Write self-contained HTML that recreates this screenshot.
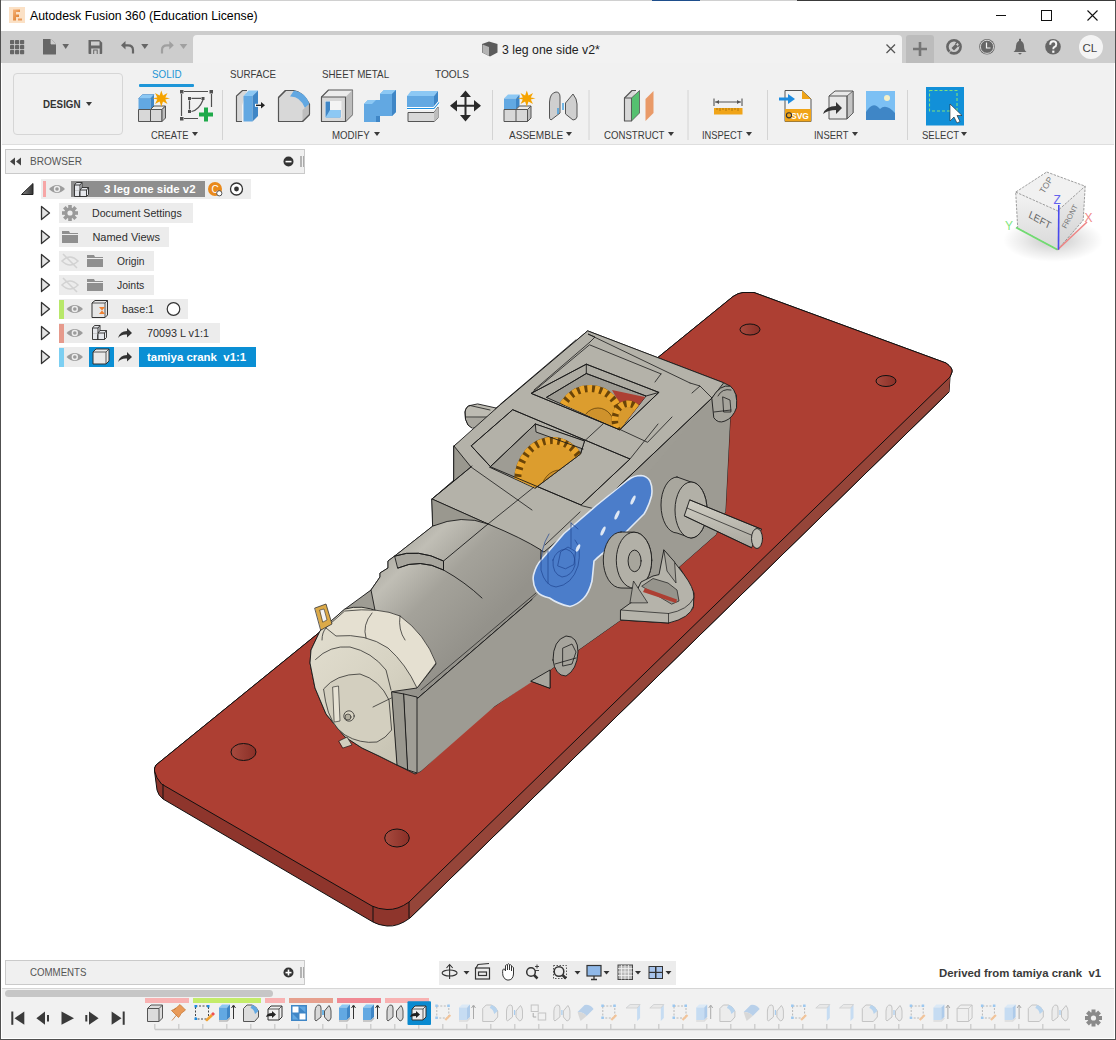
<!DOCTYPE html>
<html><head><meta charset="utf-8">
<style>
*{margin:0;padding:0;box-sizing:border-box}
html,body{width:1116px;height:1040px;overflow:hidden;background:#fff;font-family:"Liberation Sans",sans-serif;color:#3c3c3c}
.a{position:absolute}
.t{position:absolute;white-space:nowrap;line-height:1;transform-origin:0 0}
.cap{font-size:11px;color:#3a3a3a;transform:scaleX(0.88)}
.arr{position:absolute;width:0;height:0;border-left:3px solid transparent;border-right:3px solid transparent;border-top:4px solid #3a3a3a}
.row{position:absolute;font-size:11px;color:#2e2e2e;white-space:nowrap;line-height:1}
.rbg{position:absolute;background:#ececec}
</style></head>
<body>

<!-- window borders -->
<div class="a" style="left:0;top:0;width:1116px;height:1px;background:#d0d0d0;z-index:10"></div>
<div class="a" style="left:652px;top:0;width:48px;height:1px;background:#1e4e8c;z-index:10"></div>
<div class="a" style="left:797px;top:0;width:319px;height:1px;background:#3a3a3a;z-index:10"></div>
<div class="a" style="left:0;top:0;width:1px;height:1040px;background:#505050;z-index:10"></div>
<div class="a" style="left:1115px;top:0;width:1px;height:1040px;background:#505050;z-index:10"></div>
<div class="a" style="left:0;top:1039px;width:1116px;height:1px;background:#505050;z-index:10"></div>

<!-- title bar -->
<div class="a" style="left:1px;top:1px;width:1114px;height:30px;background:#fff"></div>
<svg class="a" style="left:9px;top:7px" width="16" height="16" viewBox="0 0 16 16">
<defs><linearGradient id="fg" x1="0" y1="0" x2="1" y2="1"><stop offset="0" stop-color="#f6b47a"/><stop offset="1" stop-color="#d8731e"/></linearGradient></defs>
<rect x="0" y="0" width="16" height="16" fill="#fbe1c6"/>
<path d="M4,2.5 H11 V5 H7 V7.5 H10 V10 H7 V13.5 H4 Z" fill="url(#fg)"/>
<path d="M9,11.5 H13 V13.5 H9 Z" fill="#e89a5a"/>
</svg>
<div class="t" style="left:30px;top:10px;font-size:12.3px;color:#000">Autodesk Fusion 360 (Education License)</div>
<div class="a" style="left:996px;top:15px;width:10px;height:1px;background:#111"></div>
<div class="a" style="left:1041px;top:10px;width:11px;height:11px;border:1px solid #111"></div>
<svg class="a" style="left:1086px;top:9px" width="13" height="13"><path d="M1.5 1.5L11.5 11.5M11.5 1.5L1.5 11.5" stroke="#111" stroke-width="1.1"/></svg>

<!-- tab bar -->
<div class="a" style="left:1px;top:31px;width:1114px;height:32px;background:#cdcdcd"></div>
<div class="a" style="left:193px;top:35px;width:709px;height:28px;background:#f2f2f2;border-radius:4px 4px 0 0"></div>
<svg class="a" style="left:0;top:31px" width="200" height="32" viewBox="0 31 200 32">
<g fill="#666">
<rect x="10" y="40" width="4.2" height="4.2" rx="0.7"/><rect x="15" y="40" width="4.2" height="4.2" rx="0.7"/><rect x="20" y="40" width="4.2" height="4.2" rx="0.7"/>
<rect x="10" y="45" width="4.2" height="4.2" rx="0.7"/><rect x="15" y="45" width="4.2" height="4.2" rx="0.7"/><rect x="20" y="45" width="4.2" height="4.2" rx="0.7"/>
<rect x="10" y="50" width="4.2" height="4.2" rx="0.7"/><rect x="15" y="50" width="4.2" height="4.2" rx="0.7"/><rect x="20" y="50" width="4.2" height="4.2" rx="0.7"/>
<path d="M43,39 H51 L56,44 V54 Q56,54.6 55.4,54.6 H43.6 Q43,54.6 43,54 Z"/>
<path d="M62.4,44 H69 L65.7,49 Z"/>
<path d="M88.5,40 H99.5 L102.2,42.7 V53.2 Q102.2,54 101.4,54 H89.3 Q88.5,54 88.5,53.2 Z"/>
<path d="M141.2,44 H148.4 L144.8,49 Z"/>
</g>
<path d="M51,39 V44 H56" fill="#cdcdcd" stroke="#cdcdcd" stroke-width="0.8"/>
<rect x="91" y="41.5" width="8.5" height="4" fill="#cdcdcd"/>
<rect x="91.2" y="48.5" width="8.5" height="5.5" fill="#cdcdcd"/><rect x="93.2" y="49.5" width="4.5" height="4.5" fill="#666"/><rect x="94.2" y="50.5" width="2.5" height="3.5" fill="#cdcdcd"/>
<path d="M133,53.4 V50 Q133,45.3 128,45.3 H124" stroke="#666" stroke-width="2.2" fill="none"/>
<path d="M125.5,41 L121,45.3 L125.5,49.6 Z" fill="#666"/>
<path d="M162,53.4 V50 Q162,45.3 167,45.3 H170.5" stroke="#a0a0a0" stroke-width="2.2" fill="none"/>
<path d="M169.3,41 L173.8,45.3 L169.3,49.6 Z" fill="#a0a0a0"/>
<path d="M179.7,44 H187.3 L183.5,49 Z" fill="#a0a0a0"/>
</svg>
<!-- doc tab content -->
<svg class="a" style="left:481px;top:41px" width="18" height="16" viewBox="0 0 18 16">
<path d="M1,3 L8,0.5 L16.5,3 V11.5 L9,15.5 L1,11.5 Z" fill="#5c5c5c"/>
<path d="M1.5,3.5 L8,6 V15 L1.5,11.5 Z" fill="#b4b4b4"/>
</svg>
<div class="t" style="left:502px;top:44px;font-size:12.3px;color:#222">3 leg one side v2*</div>
<svg class="a" style="left:885px;top:43px" width="12" height="12"><path d="M1.5 1.5L10 10M10 1.5L1.5 10" stroke="#555" stroke-width="1.3"/></svg>
<div class="a" style="left:906px;top:35px;width:28px;height:28px;background:#bcbcbc;border-radius:3px 3px 0 0"></div>
<svg class="a" style="left:906px;top:35px" width="210" height="28" viewBox="906 35 210 28">
<path d="M920,42 V56 M913,49 H927" stroke="#757575" stroke-width="2.6"/>
<circle cx="954" cy="46.8" r="6.6" fill="none" stroke="#666" stroke-width="2.6"/>
<path d="M948,53 L952.5,48.5 L950.5,46.5 L955,42 L959.5,46.5 L955,51 L953,49 L948.5,53.5 Z" fill="#cdcdcd"/>
<path d="M951.5,48 L955.5,44 L958,46.5 L954,50.5 Z" fill="#666"/>
<path d="M955.5,44 L958,41.5 M958,46.5 L960.5,44" stroke="#666" stroke-width="1.4"/>
<circle cx="987" cy="46.8" r="7.8" fill="#666"/>
<circle cx="987" cy="46.8" r="6.6" fill="none" stroke="#e0e0e0" stroke-width="0.9"/>
<path d="M986.5,42.5 V48 H990.5" stroke="#f2f2f2" stroke-width="1.2" fill="none"/>
<path d="M1013.5,52 Q1016,50.5 1016,46 Q1016.2,41.5 1020,40.5 Q1023.8,41.5 1024,46 Q1024,50.5 1026.5,52 Z" fill="#666"/>
<rect x="1019" y="38.8" width="2" height="2.5" fill="#666"/>
<path d="M1018,53 H1022 L1020,54.8 Z" fill="#666"/>
<circle cx="1053" cy="46.8" r="7.8" fill="#666"/>
<path d="M1050.2,44.8 Q1050.2,41.3 1053.2,41.3 Q1056.3,41.3 1056.3,44.3 Q1056.3,46.3 1054.2,47.2 Q1053.3,47.7 1053.3,49.3" fill="none" stroke="#f4f4f4" stroke-width="1.9"/>
<rect x="1052.2" y="50.6" width="2.2" height="2.2" fill="#f4f4f4"/>
<circle cx="1091" cy="47" r="12" fill="#f4f4f4"/>
<text x="1082.5" y="51.5" font-family="Liberation Sans" font-size="11.5" fill="#444">CL</text>
</svg>

<!-- toolbar -->
<div class="a" style="left:1px;top:63px;width:1114px;height:81px;background:#f1f1f1"></div>
<div class="a" style="left:1px;top:144px;width:1114px;height:1px;background:#dedede"></div>
<div class="a" style="left:13px;top:73px;width:110px;height:62px;border:1px solid #d6d6d6;border-radius:4px;background:#f1f1f1"></div>
<div class="t cap" style="left:43px;top:99px;font-weight:bold;color:#333;transform:scaleX(0.89)">DESIGN</div>
<div class="arr" style="left:86px;top:102px"></div>
<div class="t cap" style="left:151.5px;top:69px;color:#1c95d5;transform:scaleX(0.894)">SOLID</div>
<div class="a" style="left:139px;top:84px;width:55px;height:3px;background:#1e96d8;border-radius:1px"></div>
<div class="t cap" style="left:229.5px;top:69px;transform:scaleX(0.885)">SURFACE</div>
<div class="t cap" style="left:322.4px;top:69px;transform:scaleX(0.89)">SHEET METAL</div>
<div class="t cap" style="left:435.3px;top:69px;transform:scaleX(0.92)">TOOLS</div>
<div class="t cap" style="left:150.6px;top:130px;transform:scaleX(0.854)">CREATE</div><div class="arr" style="left:192px;top:132px"></div>
<div class="t cap" style="left:332.4px;top:130px;transform:scaleX(0.88)">MODIFY</div><div class="arr" style="left:374px;top:132px"></div>
<div class="t cap" style="left:508.6px;top:130px;transform:scaleX(0.914)">ASSEMBLE</div><div class="arr" style="left:566px;top:132px"></div>
<div class="t cap" style="left:603.8px;top:130px;transform:scaleX(0.876)">CONSTRUCT</div><div class="arr" style="left:667.5px;top:132px"></div>
<div class="t cap" style="left:702px;top:130px;transform:scaleX(0.847)">INSPECT</div><div class="arr" style="left:745.5px;top:132px"></div>
<div class="t cap" style="left:814.2px;top:130px;transform:scaleX(0.858)">INSERT</div><div class="arr" style="left:851.5px;top:132px"></div>
<div class="t cap" style="left:921.7px;top:130px;transform:scaleX(0.867)">SELECT</div><div class="arr" style="left:961px;top:132px"></div>

<svg class="a" style="left:0;top:63px" width="1116" height="82" viewBox="0 63 1116 82">
<g stroke-linejoin="round">
<!-- create solid -->
<g transform="translate(0,0)">
<path d="M138.5,98.5 L142.5,94.5 L154,94.5 L150.5,98.5 Z" fill="#8cc8f4" stroke="#4a8cc8" stroke-width="0.6"/>
<path d="M138.5,98.5 H150.5 V109.5 H138.5 Z" fill="#62a8e2"/>
<path d="M150.5,98.5 L154,94.5 V106 L150.5,109.5 Z" fill="#3f86c6"/>
<path d="M138.5,109.5 H162 V121.5 H138.5 Z" fill="#d8d8d8" stroke="#555" stroke-width="1"/>
<path d="M150.5,109.5 L154,106 H165.5 L162,109.5 Z" fill="#ececec" stroke="#555" stroke-width="1"/>
<path d="M162,109.5 L165.5,106 V118 L162,121.5 Z" fill="#bdbdbd" stroke="#555" stroke-width="1"/>
<line x1="150.5" y1="109.5" x2="150.5" y2="121.5" stroke="#555"/>
<path d="M161.3,90.5 L163,95.5 L167.5,93 L165.3,97.5 L170,98.3 L165.3,99.5 L167.5,104 L163,101.5 L161.3,106.5 L159.6,101.5 L155,104 L157.3,99.5 L152.5,98.3 L157.3,97.5 L155,93 L159.6,95.5 Z" fill="#f5a300"/>
</g>
<!-- sketch -->
<g stroke="#505050" stroke-width="1.2" fill="none">
<path d="M184,91.5 H208 M211.5,94 V107 M181.5,94 V116 M184,118.5 H198"/>
<path d="M191.5,98.4 H201 M189.5,100.5 V109.5 M191.5,111.5 Q199,110 203,100"/>
</g>
<g fill="#505050">
<rect x="180" y="90" width="3.5" height="3.5"/><rect x="209.5" y="90" width="3.5" height="3.5"/><rect x="180" y="117" width="3.5" height="3.5"/>
<rect x="188" y="97" width="3" height="3"/><rect x="201.5" y="97" width="3" height="3"/><rect x="188" y="110" width="3" height="3"/>
</g>
<path d="M204,107.5 H208 V112.5 H213 V116.5 H208 V121.5 H204 V116.5 H199 V112.5 H204 Z" fill="#1faa4a"/>
<line x1="222.5" y1="90" x2="222.5" y2="140" stroke="#d4d4d4"/>
<!-- press pull -->
<path d="M236.5,121.5 V96 L242.5,90.5 H247" fill="#d8d8d8" stroke="#555" stroke-width="1.1"/>
<rect x="236.5" y="96" width="5.5" height="25.5" fill="#d8d8d8"/>
<path d="M236.5,96 V121.5 H242" fill="none" stroke="#555" stroke-width="1.1"/>
<path d="M243.5,96 L248.5,90.5 H258 L252.5,96 Z" fill="#8cc8f4"/>
<rect x="243.5" y="96" width="9" height="25.5" fill="#62a8e2"/>
<path d="M252.5,96 L258,90.5 V116 L252.5,121.5 Z" fill="#3f86c6"/>
<path d="M255,105.3 H262" stroke="#fff" stroke-width="3"/>
<path d="M256,105.3 H262" stroke="#222" stroke-width="1.4"/>
<path d="M261,102 L265,105.3 L261,108.6 Z" fill="#222"/>
<!-- fillet -->
<path d="M278.5,121.5 V97.5 L285.5,90.5 H294 Q303,92 309.5,104 V114.5 L302.5,121.5 Z" fill="#d8d8d8" stroke="#555" stroke-width="1.1"/>
<path d="M290,96.5 Q300,96 305,108 L309.5,104 Q305,92 294,90.5 Z" fill="#62a8e2"/>
<path d="M302.5,121.5 V110 L309.5,104 V114.5 Z" fill="#bdbdbd"/>
<path d="M278.5,121.5 V97.5 L285.5,90.5 H294 M309.5,104 V114.5 L302.5,121.5 H278.5" fill="none" stroke="#555" stroke-width="1.1"/>
<!-- shell -->
<path d="M321.5,121.5 V97 L328.5,90 H352.5 V114.5 L345.5,121.5 Z" fill="#ececec" stroke="#555" stroke-width="1.1"/>
<path d="M345.5,121.5 V97 L352.5,90 V114.5 Z" fill="#bdbdbd"/>
<rect x="321.5" y="97" width="24" height="24.5" fill="#d8d8d8" stroke="#555" stroke-width="1.1"/>
<rect x="325" y="101" width="16.5" height="17" fill="#f4f4f4"/>
<path d="M325.5,101.5 H330 V110 H340.5 V117.5 H325.5 Z" fill="#3f86c6"/>
<path d="M330,110 H340.5 V117.5 H325.5 Z" fill="#8cc8f4"/>
<!-- combine -->
<path d="M364,104 L368,100 H380 V94 L384,90 H396 V112 L392,116 H380 V122 H364 Z" fill="#62a8e2"/>
<path d="M364,104 L368,100 H376 L372,104 Z M380,94 L384,90 H396 L392,94 Z" fill="#8cc8f4"/>
<path d="M392,94 L396,90 V112 L392,116 Z M376,116 H380 V122 L376,122 Z" fill="#3f86c6"/>
<!-- split -->
<path d="M407,96 L411,91 H438 L434,96 Z" fill="#8cc8f4"/>
<rect x="407" y="96" width="27" height="14" fill="#62a8e2"/>
<path d="M434,96 L438,91 V104 L434,110 Z" fill="#3f86c6"/>
<path d="M407,108.5 H434 L439,102.5" stroke="#fff" stroke-width="3" fill="none"/>
<path d="M407,108.5 H434 L439,102.5" stroke="#1e90e0" stroke-width="1.1" fill="none"/>
<path d="M408,112.5 H434 L438,107 V118 L434,121.5 H408 Z" fill="#d8d8d8" stroke="#555" stroke-width="1"/>
<path d="M434,112.5 L438,107 V118 L434,121.5 Z" fill="#bdbdbd"/>
<!-- move -->
<path d="M465.5,92 V120 M451.5,105.8 H479.5" stroke="#2a2a2a" stroke-width="2"/>
<path d="M465.5,90.5 L460,97 H471 Z M465.5,121.5 L460,115 H471 Z M450,105.8 L457,100 V111.5 Z M481,105.8 L474,100 V111.5 Z" fill="#2a2a2a"/>
<line x1="492.5" y1="90" x2="492.5" y2="140" stroke="#d4d4d4"/>
<!-- assemble new component -->
<g transform="translate(365.5,0)">
<path d="M138.5,98.5 L142.5,94.5 L154,94.5 L150.5,98.5 Z" fill="#8cc8f4"/>
<path d="M138.5,98.5 H150.5 V109.5 H138.5 Z" fill="#62a8e2"/>
<path d="M150.5,98.5 L154,94.5 V106 L150.5,109.5 Z" fill="#3f86c6"/>
<path d="M138.5,109.5 H162 V121.5 H138.5 Z" fill="#d8d8d8" stroke="#555" stroke-width="1"/>
<path d="M150.5,109.5 L154,106 H165.5 L162,109.5 Z" fill="#ececec" stroke="#555" stroke-width="1"/>
<path d="M162,109.5 L165.5,106 V118 L162,121.5 Z" fill="#bdbdbd" stroke="#555" stroke-width="1"/>
<line x1="150.5" y1="109.5" x2="150.5" y2="121.5" stroke="#555"/>
<path d="M161.3,90.5 L163,95.5 L167.5,93 L165.3,97.5 L170,98.3 L165.3,99.5 L167.5,104 L163,101.5 L161.3,106.5 L159.6,101.5 L155,104 L157.3,99.5 L152.5,98.3 L157.3,97.5 L155,93 L159.6,95.5 Z" fill="#f5a300"/>
</g>
<!-- joint -->
<path d="M549.5,102 Q550,93 556,92 Q560,92 560,97 V113 L551,120 Q549,119 549.5,116 Z" fill="#cfcfcf" stroke="#555" stroke-width="1"/>
<path d="M565.5,103 L573,94 Q577,99 577,104 V117 Q576,120 573,120 L565.5,114 Z" fill="#cfcfcf" stroke="#555" stroke-width="1"/>
<path d="M563,103 V110" stroke="#1e90e0" stroke-width="1.2"/><path d="M558,108 V114" stroke="#1e90e0" stroke-width="1.2"/>
<line x1="589" y1="90" x2="589" y2="140" stroke="#d4d4d4"/>
<!-- construct -->
<path d="M624.5,121 V98 L632,90.5 H636" fill="#d8d8d8" stroke="#555" stroke-width="1.1"/>
<rect x="624.5" y="98" width="7" height="23" fill="#d8d8d8" stroke="#555" stroke-width="1.1"/>
<path d="M631.5,98 L639.5,90.5 V113 L631.5,121 Z" fill="#55c070" stroke="#555" stroke-width="0.8"/>
<path d="M645.5,99 L653.5,91 V113 L645.5,121 Z" fill="#e99a68"/>
<line x1="688" y1="90" x2="688" y2="140" stroke="#d4d4d4"/>
<!-- inspect -->
<path d="M714,98.5 V106 M742,98.5 V106 M715,102 H741" stroke="#555" stroke-width="1.1"/>
<path d="M715.5,102 L719,100 V104 Z M740.5,102 L737,100 V104 Z" fill="#555"/>
<rect x="714" y="108" width="28.5" height="6.5" fill="#f0a418"/>
<path d="M717,108 V110 M720,108 V111 M723,108 V110 M726,108 V111 M729,108 V110 M732,108 V111 M735,108 V110 M738,108 V111" stroke="#8a5a00" stroke-width="0.6"/>
<line x1="767.5" y1="90" x2="767.5" y2="140" stroke="#d4d4d4"/>
<!-- insert svg -->
<path d="M785,90.5 H802 L811,99 V121.5 H785 Z" fill="#f4f4f4" stroke="#555" stroke-width="1"/>
<path d="M802,90.5 L811,99 H802 Z" fill="#f0a418"/>
<rect x="785" y="109" width="26" height="12.5" fill="#f0a418"/>
<text x="791" y="119" font-family="Liberation Sans" font-weight="bold" font-size="8.5" fill="#fff">SVG</text>
<circle cx="789" cy="115.3" r="2.6" fill="none" stroke="#333" stroke-width="1.1"/>
<path d="M779,99 H789" stroke="#1e8ce0" stroke-width="3"/>
<path d="M788,94 L795,99 L788,104 Z" fill="#1e8ce0"/>
<!-- insert derive -->
<path d="M829,96 L835,91 H853 V113 L847,119 H829 Z" fill="#e8e8e8" stroke="#555" stroke-width="1"/>
<path d="M847,96 L853,91 V113 L847,119 Z" fill="#c4c4c4" stroke="#555" stroke-width="0.8"/>
<path d="M829,96 H847 V119" fill="none" stroke="#555" stroke-width="1"/>
<path d="M823,114 Q826,106 836,106 V102 L842,108 L836,114 V110 Q828,110 823,114 Z" fill="#333"/>
<!-- insert canvas -->
<rect x="866" y="91" width="29" height="29" fill="#7cc0f4"/>
<path d="M866,112 Q873,100 880,109 Q886,103 895,113 V120 H866 Z" fill="#3f86c6"/>
<circle cx="887" cy="98" r="3" fill="#f4f0c8"/>
<line x1="907.5" y1="90" x2="907.5" y2="140" stroke="#d4d4d4"/>
<!-- select -->
<rect x="926" y="87" width="38" height="38.5" fill="#1290d8"/>
<rect x="929.5" y="90.5" width="27.5" height="20.5" fill="none" stroke="#7ee07e" stroke-width="1.1" stroke-dasharray="3,2"/>
<path d="M950,104 V121 L954,117 L957,123 L960,121.5 L957,115.5 L962,115.5 Z" fill="#fff" stroke="#222" stroke-width="0.6"/>
</g>
</svg>

<svg class="a" style="left:0;top:0" width="1116" height="1040" viewBox="0 0 1116 1040">
<defs>
<linearGradient id="cyl" gradientUnits="userSpaceOnUse" x1="392" y1="548" x2="478" y2="634">
<stop offset="0" stop-color="#aeaca4"/><stop offset="0.18" stop-color="#c0beb5"/><stop offset="0.5" stop-color="#a4a29a"/><stop offset="1" stop-color="#94928b"/>
</linearGradient>
<linearGradient id="hole" x1="0" y1="0" x2="1" y2="0">
<stop offset="0" stop-color="#a84a3e"/><stop offset="1" stop-color="#8a2f27"/>
</linearGradient>
<linearGradient id="capg" gradientUnits="userSpaceOnUse" x1="320" y1="620" x2="420" y2="720">
<stop offset="0" stop-color="#e2decf"/><stop offset="0.6" stop-color="#d6d2c2"/><stop offset="1" stop-color="#c9c5b5"/>
</linearGradient>
<linearGradient id="shaftg" gradientUnits="userSpaceOnUse" x1="0" y1="500" x2="0" y2="548">
<stop offset="0" stop-color="#cfcdc3"/><stop offset="1" stop-color="#a9a79e"/>
</linearGradient>
<clipPath id="w1"><path d="M546.7,397.2 L586.3,373.5 L646,396 L620,429.5 Z"/></clipPath>
<clipPath id="w2"><path d="M490,467 L535.3,424 L584.5,441 L580.5,454 L535.3,488 Z"/></clipPath>
</defs>
<g stroke="#111" stroke-width="1" stroke-linejoin="round">
<!-- plate silhouette (sides) -->
<path fill="#8e352c" d="M743,292.5 L754,292.5 L946,363 Q953,368 952,372 L950,377 L949,392 L410,918 Q398,927 387,926 Q378,925 373,922 L163,799 Q158,795 157,790 L154.5,771 Q154,768 156,765 L733,296.5 Q738,293 743,292.5 Z"/>
<path fill="#954539" stroke="none" d="M950,377 L949,392 L410,918 L409,902 Z"/><path fill="none" d="M949,392 L410,918"/>
<path fill="#ad3f33" d="M743,292.5 L754,292.5 L946,363 Q953,368 952,372 L950,377 L409,902 Q398,910 387,909.5 Q378,909 372,906 L161.5,784 Q156,778 154.5,771 Q154,768 156,765 L733,296.5 Q738,293 743,292.5 Z"/>
<path d="M163,784 L163,799 M373,906 V922 M409,902 V918" fill="none"/>
<ellipse cx="750" cy="329.5" rx="10" ry="5.5" fill="url(#hole)"/>
<ellipse cx="886" cy="381" rx="10" ry="5.5" fill="url(#hole)"/>
<ellipse cx="243.5" cy="752" rx="12.5" ry="8.5" fill="url(#hole)"/>
<ellipse cx="397" cy="838" rx="12.3" ry="9" fill="url(#hole)"/>
</g>
<g stroke="#1a1a1a" stroke-width="0.9" stroke-linejoin="round" stroke-linecap="round">
<!-- body silhouette base (right face colour) -->
<path fill="#9e9c94" d="M588,331 L723.7,382.8 L730.4,386.2 L736.5,395.6 L736.5,407.7 L730.4,413.8 L725.4,511.5 L716,534.6 L679,567 L684,574.6 L694,593 L693,608.5 L668.5,623 L620.8,620 L550,670 L550,688 L531,681 L495,706 L480,716 L421,771 L415,774 L397,765 L379,756 L362,748 L345,737 L326,714 L315,688 L310,663 L311,650 L320,631 L345,609 L371,590 L380,577 L380,573 L388,568 L388,561 L396,555 L433,526 L432,499 L454,480 L454,446 L479,427 L492,411 L500,405 Z"/>
<!-- left shaft stub -->
<path fill="#bdbbb2" d="M470,405.5 Q466,406 465,412 Q464.5,420 468,425 L472,428 L491,422 L496,408 L478,404 Z"/>
<path fill="#a9a79f" stroke="none" d="M466,418 Q467,425 472,428 L491,422 L493,417 Z"/>
<path fill="none" d="M470,405.5 Q466,406 465,412 Q464.5,420 468,425 L472,428 M470,405.5 L490,410 M466,417 L490,417" stroke-width="0.8"/>
<!-- top face -->
<path fill="#b4b2a9" d="M588,331 L723.7,382.8 L712,398 L595,509 L544,552 L488,524 L432,499 L454,481 L454,446 L500,405 Z"/>
<!-- left faces -->
<path fill="#9a988f" d="M454,446 L471,467 L454,481 Z"/>
<path fill="#9a988f" d="M432,499 L488,524 L433,526 Z"/>
<!-- motor cylinder -->
<path fill="url(#cyl)" d="M433,526 Q462,514 488,524 Q522,538 541,550 L540,592 L532,599.5 L418,698 L391,692 L371,590 L380,577 L380,573 L388,568 L388,561 L396,555 Z"/>
<path fill="#a7a59d" d="M395,556 Q418,548 443.5,561 V570 Q420,558 398,568 Z"/><path fill="none" d="M395,556 Q418,548 443.5,561 V570 M398,568 Q420,558 443.5,570 Q465,582 482,598 M443.5,561 L488,524"/>
<path fill="none" d="M532,599.5 L418,698 M536,593 L421,690" stroke-width="0.7"/>
<!-- right face of housing (below ridge) -->
<path fill="#9d9b93" stroke="none" d="M418,698 L532,599.5 L580,552 L712,398 L730.4,413.8 L725.4,511.5 L716,534.6 L679,567 L620.8,620 L550,670 L495,706 L421,771 L417,773 Z"/>
<path fill="none" d="M712,398 L595,509 M540,592 L580,552"/>
<!-- end block -->
<path fill="#9a988f" d="M391.6,691.7 L404,694 L408,770 L397,765 Z"/>
<path fill="#a09e96" d="M404,694 L417,697 L417,773 L408,770 Z"/>
<path fill="none" d="M418,698 L532,599.5"/>
<!-- end cap -->
<path fill="url(#capg)" d="M345,609 Q362,604 379,612 Q408,626 428,648 L436,664 L417,688 L391.6,691.7 L397,765 L379,756 L362,748 L345,737 L326,714 L315,688 L310,663 L311,650 L320,631 Z"/>
<path fill="#e5e0d1" stroke-width="0.7" d="M345,611 Q380,607 400,616 Q425,634 436,663 L417,688 Q406,664 388,648 Q366,633 336,636 L326,628 Z"/>
<path fill="none" stroke-width="0.7" d="M400,616 Q398,630 405,640 M372,613 Q362,625 366,638 M326,628 Q322,632 322,640"/>
<path fill="#d3cfbf" stroke-width="0.7" d="M323.8,688.7 Q336,674 360,674 Q380,680 389,700 L391.6,730 Q386,738 377,742 Q360,744 345,735 Q330,725 325.6,701.5 Z"/>
<path fill="none" stroke-width="0.7" d="M315.5,659.5 Q330,645 350,647 Q372,652 386,670 L391,690 M373,707 L391.4,698"/>
<path fill="#e6e2d4" stroke-width="0.6" d="M333,687 L338.5,686 L340,721 L334.5,722 Z"/>
<circle cx="349" cy="716" r="5.2" fill="#d8d3c2" stroke-width="0.7"/><circle cx="348" cy="717" r="3" fill="#b4b0a0" stroke-width="0.6"/>
<path fill="#d0ccbc" stroke-width="0.7" d="M339,741 L347,737 L352,745 L343,748 Z"/>
<!-- terminal tab -->
<path fill="#dcaa48" stroke="#333" stroke-width="0.8" d="M315,608 L326,604 L332,624 L321,630 Z"/>
<path fill="#f4f4f4" stroke="#333" stroke-width="0.6" d="M320,610 L324,609 L327,620 L323,622 Z"/>
<!-- window 1 -->
<path fill="#aeaca3" d="M531.5,393.2 L586.3,364.2 L658.9,392.4 L620,429.5 Z"/>
<path fill="#9e9c94" d="M546.7,397.2 L586.3,373.5 L646,396 L620,429.5 Z"/>
<g clip-path="url(#w1)" stroke="none">

<path fill="#ad3f33" d="M612,390 L650,398 L630,422 Z"/>
<ellipse cx="590" cy="422" rx="31" ry="33" fill="none" stroke="#6a4408" stroke-width="8" /><ellipse cx="590" cy="422" rx="31" ry="33" fill="none" stroke="#eaa52c" stroke-width="8" stroke-dasharray="4.6,2.8" stroke-linecap="butt"/>
<ellipse cx="590" cy="422" rx="28" ry="30" fill="#dc9d2e"/>
<ellipse cx="598" cy="428" rx="17" ry="20" fill="#cf922c" stroke="#3a2500" stroke-width="0.6"/>
<ellipse cx="628" cy="420" rx="13" ry="16" fill="none" stroke="#6a4408" stroke-width="7" /><ellipse cx="628" cy="420" rx="13" ry="16" fill="none" stroke="#eaa52c" stroke-width="7" stroke-dasharray="4.6,2.8" stroke-linecap="butt"/>
<ellipse cx="628" cy="420" rx="10" ry="13" fill="#d89a2e"/>
</g>
<path fill="none" d="M531.5,393.2 L586.3,364.2 L658.9,392.4 L620,429.5 Z M586.3,364.2 V373.5 L646,396 L658.9,392.4 M586.3,373.5 L546.7,397.2"/>
<!-- window 2 -->
<path fill="#b3b1a8" d="M471.5,445.6 L512.7,409.7 L630,459 L581,505 L491,467 Z"/>
<path fill="#9e9c94" d="M490,467 L535.3,424 L584.5,441 L580.5,454 L535.3,488 Z"/>
<g clip-path="url(#w2)" stroke="none">
<path fill="#b0aea5" d="M535.3,424 L584.5,441 L583,449 L536,432 Z"/>
<ellipse cx="552" cy="482" rx="34" ry="41" fill="none" stroke="#6a4408" stroke-width="8" /><ellipse cx="552" cy="482" rx="34" ry="41" fill="none" stroke="#eaa52c" stroke-width="8" stroke-dasharray="4.6,2.8" stroke-linecap="butt"/>
<ellipse cx="552" cy="482" rx="31" ry="38" fill="#dc9d2e"/>
<ellipse cx="560" cy="492" rx="19" ry="22" fill="#cf922c" stroke="#3a2500" stroke-width="0.6"/>
</g>
<path fill="none" d="M471.5,445.6 L512.7,409.7 L630,459 L581,505 L491,467 Z M490,467 L535.3,424 L584.5,441 L580.5,454 L535.3,488 M535.3,424 L536,432 L583,449"/>
<!-- top face lines -->
<path fill="none" stroke-width="0.8" d="M620,429.5 L647.6,442.3 L672,417 M603,424 L584.5,441 M595,509 L581.5,505.6"/>
<path fill="none" stroke-width="0.8" d="M500,404.5 L575.8,340 M531.5,393.2 L589.5,344.8 L661,373.9 M534,390 L590,342 M590,342 L595,337 L588,334 L690,383 M661,373.9 L655,382 M690,383 L700,386 L692,393 M700,386 L712,398 M471,467 L532,510 M488,524 L534,487 M432,499 L472,466 M580,512 L545,545 M630,459 L658,424"/>
<!-- blue crank -->
<path fill="#4b7dca" stroke="#dfe8f4" stroke-width="1.6" d="M641,475.5 Q647,476 650,481 Q653,488 651.5,496 Q649,506 644,514 L627,531 L612,546.5 Q601,554 594,561 Q593,572 592,581 Q589,593 583.5,598.5 Q577,605 570,606.5 Q558,604 549.5,598 Q540,596 536.5,591 Q532,583 533.5,575 Q536,565 542,559 L564,533.5 L597,505 L628,480 Q634,475.5 641,475.5 Z"/>
<g fill="none" stroke="#1f4590" stroke-width="0.7">
<path d="M549,534 Q540,548 541,570 Q545,586 556,587 Q572,585 578,566 Q582,548 575,540"/>
<path d="M553,560 Q556,550 566,549 Q576,552 575,565 Q572,576 562,577 Q552,574 553,560 Z"/>
<path d="M561,551.5 L568,547 L575.5,551.5 L574,564.5 L565.4,568.8 L558,566 Z"/>
<path d="M548,551 V583 M571,523 V548 M571,523 L578,529"/>
</g>
<g fill="#dfe8f4" stroke="none">
<ellipse cx="633" cy="500" rx="1.6" ry="5" transform="rotate(25 633 500)"/>
<ellipse cx="617" cy="515" rx="1.6" ry="5" transform="rotate(25 617 515)"/>
<ellipse cx="603" cy="531" rx="1.6" ry="5" transform="rotate(25 603 531)"/>
<ellipse cx="578" cy="548" rx="1.6" ry="4" transform="rotate(25 578 548)"/>
</g>
<!-- shaft boss -->
<path fill="#a9a79e" d="M677,477 L691,482 A16,28 0 0 1 691,538 L677,533 A16,28 0 0 1 677,477 Z"/>
<ellipse cx="691" cy="510" rx="16" ry="28" fill="#b2b0a7"/>
<path fill="url(#shaftg)" d="M690,500 L761.5,529.2 L751.5,547.7 L684.6,516 Z"/>
<path fill="none" d="M690,500 L761.5,529.2 M684.6,516 L751.5,547.7 M687,508 L756,537" stroke-width="0.7"/>
<ellipse cx="757" cy="538.5" rx="5.5" ry="10" fill="#bebcb2"/>
<!-- small boss -->
<path fill="#a9a79e" d="M621,532 L634,532.2 A17.7,28 0 0 1 634,588.2 L621,588 A17.7,28 0 0 1 621,532 Z"/>
<ellipse cx="634" cy="560.2" rx="17.7" ry="28" fill="#b2b0a7"/>
<ellipse cx="634.6" cy="560.9" rx="6.5" ry="10.8" fill="#a7a59c"/>
<!-- hook -->
<path fill="#b5b3aa" d="M620.8,610 L631.5,602.3 L641,582 L653,576 L659,574.6 L663.8,550 L674.6,562.3 L684,574.6 Q694,588 693.8,596 L693.5,606 Q690,618 668.5,623 L620.8,620 Z"/>
<path fill="#96948c" d="M642,586 L653,578.5 L668,583 L677,590 L679,601 L672,604 Z" stroke-width="0.7"/>
<path fill="#ad3f33" stroke="none" d="M645,588 L677,599.5 L676,603 L643,592 Z"/>
<path fill="#a6a49c" d="M630,602.5 L633.5,581 L647.5,602.5 Z" stroke-width="0.7"/>
<path fill="#a6a49c" d="M663.8,550 L667,571 L676,583 L674.6,562.3 Z" stroke-width="0.7"/>
<path fill="none" d="M620.8,610 L668.5,613.5 Q688,610 693.8,598 M668.5,613.5 V623" stroke-width="0.7"/>
<!-- screws -->
<path fill="#a6a49c" d="M712,398 Q720,384 730.4,386.2 Q738,392 736.5,407.7 Q733,418 725,421 Q718,424 714,418 Z"/>
<path fill="none" stroke-width="0.8" d="M718,396 Q722,388 731,390 M723,397 L730,400 L731,412 L724,412 Z M714,412 L731,410"/>
<path fill="#a6a49c" d="M553,660 Q553,640 566,636 Q578,636 578,652 Q577,670 566,676 Q555,676 553,660 Z"/>
<path fill="none" stroke-width="0.8" d="M563,648 L572,644 L576,652 L572,664 L563,666 Z M555,664 L576,658"/>
<!-- foot triangle -->
<path fill="#a8a69e" d="M531,681 L550,670 L550,688 Z"/>
</g>
</svg>

<!-- browser header -->
<div class="a" style="left:5px;top:149px;width:300px;height:25px;background:#f0f0f0;border:1px solid #cacaca"></div>
<svg class="a" style="left:9px;top:157px" width="14" height="9"><path d="M6,0.5 L1,4.5 L6,8.5 Z M12,0.5 L7,4.5 L12,8.5 Z" fill="#444"/></svg>
<div class="t" style="left:30px;top:156px;font-size:11px;color:#555;transform:scaleX(0.915)">BROWSER</div>
<svg class="a" style="left:282px;top:155px" width="24" height="14">
<circle cx="6.5" cy="6.5" r="5" fill="#333"/><rect x="3.5" y="5.8" width="6" height="1.6" fill="#fff"/>
<rect x="18.5" y="1" width="1" height="11" fill="#777"/><rect x="21" y="1" width="1" height="11" fill="#aaa"/>
</svg>
<!-- row 1 -->
<svg class="a" style="left:20px;top:182px" width="15" height="14"><defs><linearGradient id="tg" x1="0" y1="0" x2="1" y2="0"><stop offset="0" stop-color="#888"/><stop offset="1" stop-color="#333"/></linearGradient></defs><path d="M1.5,12.5 L13,1.5 V12.5 Z" fill="url(#tg)" stroke="#222" stroke-width="1"/></svg>
<div class="rbg" style="left:41px;top:179px;width:210px;height:20px;background:#ededed"></div>
<div class="a" style="left:43px;top:181px;width:3px;height:16px;background:#f6a6a6"></div>
<svg class="a" style="left:48px;top:182px" width="18" height="14"><path d="M1,7 Q9,-1 17,7 Q9,15 1,7 Z" fill="#9c9c9c"/><circle cx="9" cy="7" r="3.2" fill="#ededed"/><circle cx="9" cy="7" r="1.8" fill="#9c9c9c"/></svg>
<div class="a" style="left:71px;top:181px;width:134px;height:16px;background:#8e8e8e"></div>
<svg class="a" style="left:73px;top:181px" width="18" height="17"><g transform="translate(0.5,0.5)" stroke="#2a2a2a" stroke-width="0.9" stroke-linejoin="round">
<path d="M1,3.5 L3,1 H8.5 V8.5 L6.5,10.5 V15 H1 Z" fill="#e6e8ec"/>
<path d="M1,3.5 H6.5 V15 M6.5,3.5 L8.5,1" fill="none"/>
<path d="M6.5,8.5 L8.5,6 H15 V13 L13,15 H6.5 Z" fill="#e6e8ec"/>
<path d="M6.5,8.5 H13 V15 M13,8.5 L15,6" fill="none"/>
<path d="M1.5,9 H6" stroke="#bbb" stroke-width="0.6"/>
</g></svg>
<div class="t" style="left:104px;top:184px;font-size:11px;color:#fff;font-weight:bold;transform:scaleX(1.04)">3 leg one side v2</div>
<svg class="a" style="left:207px;top:181px" width="40" height="16">
<circle cx="8" cy="8" r="7" fill="#e98a1c"/><text x="4.5" y="12" font-family="Liberation Sans" font-size="10" fill="#fff">C</text>
<circle cx="12.3" cy="12.3" r="2.6" fill="#fff" stroke="#444" stroke-width="0.9"/>
<circle cx="29.5" cy="8" r="6" fill="#fff" stroke="#333" stroke-width="1.3"/><circle cx="29.5" cy="8" r="2.4" fill="#333"/>
</svg>
<!-- child rows -->
<svg class="a" style="left:38px;top:203px" width="16" height="168">
<g fill="#e4e4e4" stroke="#333" stroke-width="1.3" stroke-linejoin="round">
<path d="M3.5,3.5 L11.5,10 L3.5,16.5 Z"/>
<path d="M3.5,27.5 L11.5,34 L3.5,40.5 Z"/>
<path d="M3.5,51.5 L11.5,58 L3.5,64.5 Z"/>
<path d="M3.5,75.5 L11.5,82 L3.5,88.5 Z"/>
<path d="M3.5,99.5 L11.5,106 L3.5,112.5 Z"/>
<path d="M3.5,123.5 L11.5,130 L3.5,136.5 Z"/>
<path d="M3.5,147.5 L11.5,154 L3.5,160.5 Z"/>
</g></svg>
<div class="rbg" style="left:59px;top:203px;width:134px;height:20px"></div>
<div class="rbg" style="left:59px;top:227px;width:110px;height:20px"></div>
<div class="rbg" style="left:59px;top:251px;width:95px;height:20px"></div>
<div class="rbg" style="left:59px;top:275px;width:95px;height:20px"></div>
<div class="rbg" style="left:59px;top:299px;width:129px;height:20px"></div>
<div class="rbg" style="left:59px;top:323px;width:161px;height:20px"></div>
<div class="rbg" style="left:59px;top:347px;width:80px;height:20px"></div>
<div class="a" style="left:59px;top:300px;width:5px;height:19px;background:#b8e86a"></div>
<div class="a" style="left:59px;top:324px;width:5px;height:19px;background:#e69a8c"></div>
<div class="a" style="left:59px;top:348px;width:5px;height:19px;background:#7ccff2"></div>
<svg class="a" style="left:59px;top:203px" width="60" height="168" viewBox="59 203 60 168">
<!-- gear -->
<g transform="translate(70,213)"><g fill="#9a9a9a">
<circle r="5.6"/>
<rect x="-1.8" y="-8" width="3.6" height="16"/><rect x="-8" y="-1.8" width="16" height="3.6"/>
<rect x="-1.8" y="-8" width="3.6" height="16" transform="rotate(45)"/><rect x="-1.8" y="-8" width="3.6" height="16" transform="rotate(-45)"/>
</g><circle r="2.6" fill="#ededed"/></g>
<!-- folders -->
<path d="M62,231 H69 L70,233 H78 V243 H62 Z" fill="#8f8f8f"/><rect x="62" y="234" width="16" height="1" fill="#ededed"/>
<path d="M87,255 H94 L95,257 H103 V267 H87 Z" fill="#8f8f8f"/><rect x="87" y="258" width="16" height="1" fill="#ededed"/>
<path d="M87,279 H94 L95,281 H103 V291 H87 Z" fill="#8f8f8f"/><rect x="87" y="282" width="16" height="1" fill="#ededed"/>
<!-- eye off -->
<g fill="none" stroke="#d2d2d2" stroke-width="1.6"><path d="M62,261 Q70,253 78,261 Q70,269 62,261 Z M63,254 L77,268"/><path d="M62,285 Q70,277 78,285 Q70,293 62,285 Z M63,278 L77,292"/></g>
<!-- eyes -->
<g><path d="M66.5,309 Q74.8,301 83,309 Q74.8,317 66.5,309 Z" fill="#9c9c9c"/><circle cx="74.8" cy="309" r="3.2" fill="#ededed"/><circle cx="74.8" cy="309" r="1.8" fill="#9c9c9c"/></g>
<g><path d="M66.5,333 Q74.8,325 83,333 Q74.8,341 66.5,333 Z" fill="#9c9c9c"/><circle cx="74.8" cy="333" r="3.2" fill="#ededed"/><circle cx="74.8" cy="333" r="1.8" fill="#9c9c9c"/></g>
<g><path d="M66.5,357 Q74.8,349 83,357 Q74.8,365 66.5,357 Z" fill="#9c9c9c"/><circle cx="74.8" cy="357" r="3.2" fill="#ededed"/><circle cx="74.8" cy="357" r="1.8" fill="#9c9c9c"/></g>
</svg>
<svg class="a" style="left:88px;top:299px" width="50" height="70" viewBox="88 299 50 70">
<!-- base icon -->
<path d="M92,303 L95,300.5 H107.5 V315 L105,317.5 H92 Z" fill="#e6e6e6" stroke="#333" stroke-width="1"/>
<path d="M92,303 H105 V317.5 M105,303 L107.5,300.5" fill="none" stroke="#333" stroke-width="0.8"/>
<path d="M99,307 H105 L102,310.5 L105,314 H99 L102,310.5 Z" fill="#f08030"/>
<!-- 70093 icon -->
<g transform="translate(91.5,324.5)" stroke="#2a2a2a" stroke-width="0.9" stroke-linejoin="round">
<path d="M1,3.5 L3,1 H8.5 V8.5 L6.5,10.5 V15 H1 Z" fill="#e6e8ec"/>
<path d="M1,3.5 H6.5 V15 M6.5,3.5 L8.5,1" fill="none"/>
<path d="M6.5,8.5 L8.5,6 H15 V13 L13,15 H6.5 Z" fill="#e6e8ec"/>
<path d="M6.5,8.5 H13 V15 M13,8.5 L15,6" fill="none"/>
<path d="M1.5,9 H6" stroke="#bbb" stroke-width="0.6"/>
</g>
<!-- tamiya icon -->
<rect x="89" y="347" width="25" height="20" fill="#0a8fd4"/>
<path d="M93,352 L96,349 H109 V361 L106,364 H93 Z" fill="#e8e8e8" stroke="#333" stroke-width="1"/>
<path d="M93,352 H106 V364 M106,352 L109,349" fill="none" stroke="#333" stroke-width="0.8"/>
<!-- arrows -->
<path d="M118,338 Q120,331 127,331 V328 L132,333 L127,337.5 V334.5 Q121,334 118,338 Z" fill="#333"/>
<path d="M118,362 Q120,355 127,355 V352 L132,357 L127,361.5 V358.5 Q121,358 118,362 Z" fill="#333"/>
</svg>
<svg class="a" style="left:165px;top:301px" width="18" height="16"><circle cx="8.5" cy="8" r="6.3" fill="#fff" stroke="#333" stroke-width="1.2"/></svg>
<div class="a" style="left:139px;top:347px;width:117px;height:20px;background:#0a8fd4"></div>
<div class="row" style="left:92.4px;top:208px;transform:scaleX(0.965);transform-origin:0 0">Document Settings</div>
<div class="row" style="left:92.4px;top:232px">Named Views</div>
<div class="row" style="left:117px;top:256px;transform:scaleX(0.935);transform-origin:0 0">Origin</div>
<div class="row" style="left:117px;top:280px;transform:scaleX(0.95);transform-origin:0 0">Joints</div>
<div class="row" style="left:122.4px;top:304px;transform:scaleX(0.97);transform-origin:0 0">base:1</div>
<div class="row" style="left:147.4px;top:328px;transform:scaleX(0.98);transform-origin:0 0">70093 L v1:1</div>
<div class="row" style="left:147.4px;top:352px;color:#fff;font-weight:bold;transform:scaleX(1.04);transform-origin:0 0">tamiya crank&nbsp; v1:1</div>

<!-- view cube -->
<svg class="a" style="left:990px;top:160px" width="120" height="110" viewBox="990 160 120 110">
<defs>
<radialGradient id="vsh" cx="0.5" cy="0.5" r="0.5"><stop offset="0" stop-color="#000" stop-opacity="0.22"/><stop offset="0.6" stop-color="#000" stop-opacity="0.08"/><stop offset="1" stop-color="#000" stop-opacity="0"/></radialGradient>
<linearGradient id="vl" x1="0" y1="0" x2="0" y2="1"><stop offset="0" stop-color="#f3f3f3"/><stop offset="1" stop-color="#d9d9d9"/></linearGradient>
<linearGradient id="vr" x1="0" y1="0" x2="0" y2="1"><stop offset="0" stop-color="#efefef"/><stop offset="1" stop-color="#d2d2d2"/></linearGradient>
</defs>
<ellipse cx="1053" cy="240" rx="50" ry="22" fill="url(#vsh)"/>
<path d="M1046.7,172 L1085.2,186.2 L1057.6,210.8 L1015.7,192.1 Z" fill="#f1f1f1"/>
<path d="M1015.7,192.1 L1057.6,210.8 V249.8 L1017.7,228.1 Z" fill="url(#vl)"/>
<path d="M1057.6,210.8 L1085.2,186.2 L1083.2,220.2 L1057.6,249.8 Z" fill="url(#vr)"/>
<path d="M1046.7,172 L1085.2,186.2 L1083.2,220.2 L1057.6,249.8 L1017.7,228.1 L1015.7,192.1 Z M1015.7,192.1 L1057.6,210.8 L1085.2,186.2" fill="none" stroke="#777" stroke-width="0.7" stroke-dasharray="2.5,1.2"/>
<text x="0" y="0" font-family="Liberation Sans" font-size="10" fill="#666" transform="translate(1028,217) rotate(22) skewY(8)">LEFT</text>
<text x="0" y="0" font-family="Liberation Sans" font-size="7.5" fill="#777" transform="translate(1066,229) rotate(-62)">FRONT</text>
<text x="0" y="0" font-family="Liberation Sans" font-size="8.5" fill="#777" transform="translate(1044,194) rotate(-58)">TOP</text>
<path d="M1057.6,249.8 L1016,227.5" stroke="#70dc70" stroke-width="1.8"/>
<path d="M1057.6,249.8 L1087,222" stroke="#ee8484" stroke-width="1.5"/>
<path d="M1058.5,249.8 L1058.8,205" stroke="#4848ee" stroke-width="1.6"/>
<text x="1005" y="230" font-family="Liberation Sans" font-size="12" fill="#80e680">Y</text>
<text x="1084.5" y="222" font-family="Liberation Sans" font-size="12" fill="#f08888">X</text>
<text x="1053.5" y="203.5" font-family="Liberation Sans" font-size="12" fill="#6464ee">Z</text>
</svg>

<!-- comments -->
<div class="a" style="left:5px;top:960px;width:300px;height:25px;background:#f0f0f0;border:1px solid #cacaca"></div>
<div class="t" style="left:30px;top:967px;font-size:11px;color:#555;transform:scaleX(0.88)">COMMENTS</div>
<svg class="a" style="left:282px;top:966px" width="24" height="14">
<circle cx="6.5" cy="6.5" r="5" fill="#333"/><rect x="3.5" y="5.8" width="6" height="1.6" fill="#fff"/><rect x="5.7" y="3.5" width="1.6" height="6" fill="#fff"/>
<rect x="18.5" y="1" width="1" height="11" fill="#777"/><rect x="21" y="1" width="1" height="11" fill="#aaa"/>
</svg>

<!-- nav bar -->
<div class="a" style="left:439px;top:961px;width:237px;height:24px;background:#ececec"></div>
<svg class="a" style="left:439px;top:961px" width="237" height="24" viewBox="439 961 237 24">
<g stroke="#333" fill="none" stroke-width="1.1">
<path d="M449.6,979 V965 M446.5,968 L449.6,964.5 L452.7,968"/>
<ellipse cx="449.6" cy="973" rx="7.5" ry="3"/>
</g>
<path d="M463.5,971 H469.5 L466.5,974.5 Z" fill="#333"/>
<g stroke="#333" fill="none" stroke-width="1.2"><rect x="475.5" y="968" width="14" height="11"/><rect x="478.5" y="972" width="8" height="3.5"/><path d="M476,968 L478,964.5 L489,963.5"/></g>
<path d="M503,976 Q502,970 503.5,969 Q505,968.5 505.5,971 V965.5 Q506.5,964 507.5,965.5 V970 V964.5 Q508.5,963 509.5,964.5 V970 V965.5 Q510.5,964 511.5,965.5 V971 V967.5 Q512.5,966 513.5,967.5 V974 Q513,979.5 509,980 H507 Q504.5,979.5 503,976 Z" fill="#fff" stroke="#333" stroke-width="1"/>
<g stroke="#333" fill="none"><circle cx="531" cy="972" r="4.3" stroke-width="1.5"/><path d="M534,975 L537.5,978.5" stroke-width="2.5"/><path d="M537,964.5 V968.5 M535,966.5 H539 M535,970.5 H539" stroke-width="0.9"/></g>
<g stroke="#333" fill="none"><rect x="553.5" y="965.5" width="13" height="13" stroke-dasharray="1.5,1.5" stroke-width="0.8"/><circle cx="559" cy="971.5" r="4.8" stroke-width="1.5"/><path d="M562.5,975 L566,978.5" stroke-width="2.5"/></g>
<path d="M574.5,971 H580.5 L577.5,974.5 Z" fill="#333"/>
<rect x="587" y="965.5" width="14" height="10.5" fill="#8fb8e8" stroke="#333" stroke-width="1.2"/><path d="M591,979.5 H597 M594,976 V979.5" stroke="#333" stroke-width="1.3"/>
<path d="M603.5,971 H609.5 L606.5,974.5 Z" fill="#333"/>
<rect x="618" y="965" width="14.5" height="14.5" fill="#bbb" stroke="#444" stroke-width="1"/>
<path d="M621.5,965 V979.5 M625,965 V979.5 M628.5,965 V979.5 M618,968.5 H632.5 M618,972 H632.5 M618,975.5 H632.5" stroke="#f4f4f4" stroke-width="0.8"/>
<path d="M635,971 H641 L638,974.5 Z" fill="#333"/>
<rect x="648.5" y="966" width="14.5" height="13" fill="#333"/>
<rect x="649.5" y="967" width="5.5" height="4.8" fill="#a8c4ec"/><rect x="656.5" y="967" width="5.5" height="4.8" fill="#a8c4ec"/><rect x="649.5" y="973" width="5.5" height="5" fill="#a8c4ec"/><rect x="656.5" y="973" width="5.5" height="5" fill="#a8c4ec"/>
<path d="M665.5,971 H671.5 L668.5,974.5 Z" fill="#333"/>
</svg>
<div class="t" style="left:939px;top:967.5px;font-size:11.4px;font-weight:bold;color:#3a3a3a">Derived from tamiya crank&nbsp; v1</div>

<!-- timeline -->
<div class="a" style="left:1px;top:988px;width:1114px;height:51px;background:#f1f1f1;border-top:1px solid #d6d6d6"></div>
<div class="a" style="left:5px;top:990px;width:268px;height:7px;background:#c6c6c6;border-radius:3.5px"></div>
<div class="a" style="left:145px;top:997.5px;width:44px;height:5px;background:#f8b2b2"></div>
<div class="a" style="left:193px;top:997.5px;width:68px;height:5px;background:#c4ec6a"></div>
<div class="a" style="left:265px;top:997.5px;width:20px;height:5px;background:#f8b2b2"></div>
<div class="a" style="left:289px;top:997.5px;width:44px;height:5px;background:#e6a08e"></div>
<div class="a" style="left:337px;top:997.5px;width:44px;height:5px;background:#f08a94"></div>
<div class="a" style="left:385px;top:997.5px;width:44px;height:5px;background:#f8b2b2"></div>
<svg class="a" style="left:0;top:1000px" width="1116" height="39" viewBox="0 1000 1116 39">
<g fill="#3a3a3a">
<rect x="11.3" y="1011.5" width="2" height="13.3"/><path d="M24.3,1011.5 V1024.8 L14.5,1018.2 Z"/>
<path d="M45,1011.5 V1024.8 L36.4,1018.2 Z"/><rect x="47" y="1015" width="2" height="6.5"/>
<path d="M61.5,1011.5 V1024.8 L74,1018.2 Z"/>
<rect x="85.3" y="1015" width="2" height="6.5"/><path d="M89,1011.5 V1024.8 L98.6,1018.2 Z"/>
<path d="M111.6,1011.5 V1024.8 L121.5,1018.2 Z"/><rect x="122.7" y="1011.5" width="2" height="13.3"/>
</g>
<path d="M155,1029.5 H1070" stroke="#c8c8c8" stroke-width="1.5"/><rect x="1064" y="1000" width="10" height="22" fill="#f1f1f1"/>
<g stroke="#c8c8c8" stroke-width="1.2"><path d="M154.8,1024 V1029.5"/><path d="M178.8,1024 V1029.5"/><path d="M202.8,1024 V1029.5"/><path d="M226.8,1024 V1029.5"/><path d="M250.8,1024 V1029.5"/><path d="M274.8,1024 V1029.5"/><path d="M298.8,1024 V1029.5"/><path d="M322.8,1024 V1029.5"/><path d="M346.8,1024 V1029.5"/><path d="M370.8,1024 V1029.5"/><path d="M394.8,1024 V1029.5"/><path d="M418.8,1024 V1029.5"/><path d="M442.8,1024 V1029.5"/><path d="M466.8,1024 V1029.5"/><path d="M490.8,1024 V1029.5"/><path d="M514.8,1024 V1029.5"/><path d="M538.8,1024 V1029.5"/><path d="M562.8,1024 V1029.5"/><path d="M586.8,1024 V1029.5"/><path d="M610.8,1024 V1029.5"/><path d="M634.8,1024 V1029.5"/><path d="M658.8,1024 V1029.5"/><path d="M682.8,1024 V1029.5"/><path d="M706.8,1024 V1029.5"/><path d="M730.8,1024 V1029.5"/><path d="M754.8,1024 V1029.5"/><path d="M778.8,1024 V1029.5"/><path d="M802.8,1024 V1029.5"/><path d="M826.8,1024 V1029.5"/><path d="M850.8,1024 V1029.5"/><path d="M874.8,1024 V1029.5"/><path d="M898.8,1024 V1029.5"/><path d="M922.8,1024 V1029.5"/><path d="M946.8,1024 V1029.5"/><path d="M970.8,1024 V1029.5"/><path d="M994.8,1024 V1029.5"/><path d="M1018.8,1024 V1029.5"/><path d="M1042.8,1024 V1029.5"/></g>
<rect x="407.5" y="1001.3" width="23.5" height="23.7" fill="#0a8ad0" rx="1"/>
<!-- icons -->
<g stroke="#555" stroke-width="1" stroke-linejoin="round">
<path d="M147.5,1008.5 L151,1005 H162.5 V1018 L159,1021.5 H147.5 Z" fill="#dcdcdc"/><path d="M147.5,1008.5 H159 V1021.5 M159,1008.5 L162.5,1005" fill="none"/>
</g>
<path d="M172,1020.5 L177,1014.5 M174,1010 L180,1004.5 L185.5,1010 L181,1013.5 Q180,1016 178.5,1017.5 L171.5,1010.5 Q174,1009.5 176,1008 Z" fill="#e99a58" stroke="#c87a38" stroke-width="0.8"/>
<rect x="195.5" y="1006" width="13" height="13" fill="none" stroke="#333" stroke-width="0.9" stroke-dasharray="2,1.5"/>
<rect x="194.5" y="1005" width="2.5" height="2.5" fill="#1e8ce0"/><rect x="207" y="1005" width="2.5" height="2.5" fill="#1e8ce0"/><rect x="194.5" y="1017.5" width="2.5" height="2.5" fill="#1e8ce0"/>
<path d="M205,1020 L211,1014 L213,1016 L207,1021.5 Z" fill="#f0a030"/><path d="M211,1014 L213,1012 L215,1014 L213,1016 Z" fill="#f05050"/>
<g transform="translate(0,0)">
<path d="M219,1007.5 L222,1004.5 H230 L227,1007.5 Z" fill="#8cc8f4"/><rect x="219" y="1007.5" width="8" height="12.5" fill="#62a8e2"/><path d="M227,1007.5 L230,1004.5 V1017 L227,1020 Z" fill="#3f86c6"/>
<path d="M219,1021 H227 L230,1018" stroke="#bbb" stroke-width="1.5" fill="none"/><path d="M233.5,1019 V1006 M231.5,1008 L233.5,1005 L235.5,1008" stroke="#333" stroke-width="1" fill="none"/>
</g>
<path d="M243.5,1021.5 V1008.5 L247,1005 H252 Q256,1006 258.5,1011 V1017 L254.5,1021.5 Z" fill="#dcdcdc" stroke="#555" stroke-width="1"/><path d="M252,1005 Q256.5,1006 258.5,1011 L255,1014 Q254,1009 250.5,1008" fill="#62a8e2"/>
<g transform="translate(0,0)">
<path d="M268,1009 L271,1006 H282 V1017 L279,1020 H268 Z" fill="#eee" stroke="#333" stroke-width="1"/><path d="M268,1009 H279 V1020 M279,1009 L282,1006" fill="none" stroke="#333" stroke-width="0.8"/>
<path d="M266,1017 Q267,1013 272,1013 V1011 L276,1014.5 L272,1018 V1016 Q268,1016 266,1017 Z" fill="#222"/>
</g>
<rect x="291" y="1005" width="16" height="16" fill="#3f86c6"/><rect x="292.5" y="1006.5" width="6" height="6" fill="#fff"/><rect x="299.5" y="1013.5" width="6" height="6" fill="#fff"/><path d="M298.5,1006.5 H305.5 V1012.5 M292.5,1013.5 V1019.5 H298.5" fill="#62a8e2"/>
<g fill="#d8d8d8" stroke="#555" stroke-width="1">
<path d="M315,1011 Q315.5,1005 319,1005 Q321,1005 321,1008 V1017 L316,1021 Q314.5,1020 315,1018 Z"/><path d="M324.5,1011 L329,1005.5 Q331,1008 331,1011 V1018 Q330,1021 328,1021 L324.5,1017 Z"/>
</g>
<path d="M323,1010 V1015" stroke="#1e90e0" stroke-width="1.2"/>
<g transform="translate(120,0)"><path d="M219,1007.5 L222,1004.5 H230 L227,1007.5 Z" fill="#8cc8f4"/><rect x="219" y="1007.5" width="8" height="12.5" fill="#62a8e2"/><path d="M227,1007.5 L230,1004.5 V1017 L227,1020 Z" fill="#3f86c6"/><path d="M219,1021 H227 L230,1018" stroke="#bbb" stroke-width="1.5" fill="none"/><path d="M233.5,1019 V1006 M231.5,1008 L233.5,1005 L235.5,1008" stroke="#333" stroke-width="1" fill="none"/></g>
<g transform="translate(144,0)"><path d="M219,1007.5 L222,1004.5 H230 L227,1007.5 Z" fill="#8cc8f4"/><rect x="219" y="1007.5" width="8" height="12.5" fill="#62a8e2"/><path d="M227,1007.5 L230,1004.5 V1017 L227,1020 Z" fill="#3f86c6"/><path d="M219,1021 H227 L230,1018" stroke="#bbb" stroke-width="1.5" fill="none"/><path d="M233.5,1019 V1006 M231.5,1008 L233.5,1005 L235.5,1008" stroke="#333" stroke-width="1" fill="none"/></g>
<g transform="translate(72,0)" fill="#d8d8d8" stroke="#555" stroke-width="1"><path d="M315,1011 Q315.5,1005 319,1005 Q321,1005 321,1008 V1017 L316,1021 Q314.5,1020 315,1018 Z"/><path d="M324.5,1011 L329,1005.5 Q331,1008 331,1011 V1018 Q330,1021 328,1021 L324.5,1017 Z"/></g>
<g transform="translate(144,0)"><path d="M268,1009 L271,1006 H282 V1017 L279,1020 H268 Z" fill="#eee" stroke="#333" stroke-width="1"/><path d="M268,1009 H279 V1020 M279,1009 L282,1006" fill="none" stroke="#333" stroke-width="0.8"/><path d="M266,1017 Q267,1013 272,1013 V1011 L276,1014.5 L272,1018 V1016 Q268,1016 266,1017 Z" fill="#222"/></g>
<!-- faded icons -->
<g stroke-width="1"><rect x="436.8" y="1006" width="12" height="12" fill="none" stroke="#b8b8b8" stroke-dasharray="2,1.5"/><rect x="435.3" y="1004.5" width="2.5" height="2.5" fill="#9cc8f0"/><rect x="447.3" y="1004.5" width="2.5" height="2.5" fill="#9cc8f0"/><rect x="435.3" y="1016.5" width="2.5" height="2.5" fill="#9cc8f0"/><path d="M445.3,1020 L450.3,1015" stroke="#f2c49a" stroke-width="2.2"/><path d="M459.0,1007.5 L462.0,1004.5 H470.0 L467.0,1007.5 Z" fill="#dbe9f6"/><rect x="459.0" y="1007.5" width="8" height="12.5" fill="#c6dcf2"/><path d="M467.0,1007.5 L470.0,1004.5 V1017 L467.0,1020 Z" fill="#aecbea"/><path d="M459.0,1021 H467.0 L470.0,1018" stroke="#dcdcdc" stroke-width="1.5" fill="none"/><path d="M473.5,1019 V1006 M471.5,1008 L473.5,1005 L475.5,1008" stroke="#aaa" stroke-width="1" fill="none"/><path d="M482.7,1021.5 V1008.5 L486.2,1005 H491.2 Q495.2,1006 497.7,1011 V1017 L493.7,1021.5 Z" fill="#ececec" stroke="#c4c4c4" stroke-width="1"/><path d="M491.2,1005 Q495.7,1006 497.7,1011 L494.2,1014 Q493.2,1009 489.7,1008" fill="#b8d4ee"/><path d="M506.5,1011 Q507.0,1005 510.5,1005 Q512.5,1005 512.5,1008 V1017 L507.5,1021 Q506.0,1020 506.5,1018 Z M516.0,1011 L520.5,1005.5 Q522.5,1008 522.5,1011 V1018 Q521.5,1021 519.5,1021 L516.0,1017 Z" fill="#ececec" stroke="#c4c4c4" stroke-width="1"/><path d="M514.5,1010 V1015" stroke="#a8cdf0" stroke-width="1.2"/><rect x="531.2" y="1005" width="7" height="6.5" fill="none" stroke="#c4c4c4"/><rect x="538.2" y="1013" width="7.5" height="7" fill="none" stroke="#c4c4c4"/><path d="M533.2,1013 V1017 H536.2" stroke="#aaa" fill="none"/><path d="M553.9,1011 Q554.4,1005 557.9,1005 Q559.9,1005 559.9,1008 V1017 L554.9,1021 Q553.4,1020 553.9,1018 Z M563.4,1011 L567.9,1005.5 Q569.9,1008 569.9,1011 V1018 Q568.9,1021 566.9,1021 L563.4,1017 Z" fill="#ececec" stroke="#c4c4c4" stroke-width="1"/><path d="M561.9,1010 V1015" stroke="#a8cdf0" stroke-width="1.2"/><path d="M577.6,1012 L584.6,1005 Q589.6,1004 593.6,1009 L586.6,1016 Q583.6,1012 577.6,1012 Z" fill="#b8d0ea"/><path d="M577.6,1012 Q583.6,1012 586.6,1016 L580.6,1021 Q578.6,1016 577.6,1012 Z" fill="#d8d8d8"/><rect x="602.8" y="1006" width="12" height="12" fill="none" stroke="#b8b8b8" stroke-dasharray="2,1.5"/><rect x="601.3" y="1004.5" width="2.5" height="2.5" fill="#9cc8f0"/><rect x="613.3" y="1004.5" width="2.5" height="2.5" fill="#9cc8f0"/><rect x="601.3" y="1016.5" width="2.5" height="2.5" fill="#9cc8f0"/><path d="M611.3,1020 L616.3,1015" stroke="#f2c49a" stroke-width="2.2"/><path d="M626.1,1008 L630.1,1004.5 H640.1 V1018 L637.1,1021 V1008 Z" fill="#c6dcf2"/><path d="M626.1,1008 L630.1,1004.5 H640.1 L637.1,1008 Z" fill="#e8e8e8" stroke="#cfcfcf" stroke-width="0.8"/><path d="M649.8,1008 L653.8,1004.5 H663.8 V1018 L660.8,1021 V1008 Z" fill="#c6dcf2"/><path d="M649.8,1008 L653.8,1004.5 H663.8 L660.8,1008 Z" fill="#e8e8e8" stroke="#cfcfcf" stroke-width="0.8"/><rect x="674.0" y="1006" width="12" height="12" fill="none" stroke="#b8b8b8" stroke-dasharray="2,1.5"/><rect x="672.5" y="1004.5" width="2.5" height="2.5" fill="#9cc8f0"/><rect x="684.5" y="1004.5" width="2.5" height="2.5" fill="#9cc8f0"/><rect x="672.5" y="1016.5" width="2.5" height="2.5" fill="#9cc8f0"/><path d="M682.5,1020 L687.5,1015" stroke="#f2c49a" stroke-width="2.2"/><path d="M696.2,1007.5 L699.2,1004.5 H707.2 L704.2,1007.5 Z" fill="#dbe9f6"/><rect x="696.2" y="1007.5" width="8" height="12.5" fill="#c6dcf2"/><path d="M704.2,1007.5 L707.2,1004.5 V1017 L704.2,1020 Z" fill="#aecbea"/><path d="M696.2,1021 H704.2 L707.2,1018" stroke="#dcdcdc" stroke-width="1.5" fill="none"/><path d="M710.7,1019 V1006 M708.7,1008 L710.7,1005 L712.7,1008" stroke="#aaa" stroke-width="1" fill="none"/><path d="M719.9,1021.5 V1008.5 L723.4,1005 H728.4 Q732.4,1006 734.9,1011 V1017 L730.9,1021.5 Z" fill="#ececec" stroke="#c4c4c4" stroke-width="1"/><path d="M728.4,1005 Q732.9,1006 734.9,1011 L731.4,1014 Q730.4,1009 726.9,1008" fill="#b8d4ee"/><path d="M743.7,1012 L750.7,1005 Q755.7,1004 759.7,1009 L752.7,1016 Q749.7,1012 743.7,1012 Z" fill="#b8d0ea"/><path d="M743.7,1012 Q749.7,1012 752.7,1016 L746.7,1021 Q744.7,1016 743.7,1012 Z" fill="#d8d8d8"/><path d="M767.4,1011 Q767.9,1005 771.4,1005 Q773.4,1005 773.4,1008 V1017 L768.4,1021 Q766.9,1020 767.4,1018 Z M776.9,1011 L781.4,1005.5 Q783.4,1008 783.4,1011 V1018 Q782.4,1021 780.4,1021 L776.9,1017 Z" fill="#ececec" stroke="#c4c4c4" stroke-width="1"/><path d="M775.4,1010 V1015" stroke="#a8cdf0" stroke-width="1.2"/><rect x="792.6" y="1006" width="12" height="12" fill="none" stroke="#b8b8b8" stroke-dasharray="2,1.5"/><rect x="791.1" y="1004.5" width="2.5" height="2.5" fill="#9cc8f0"/><rect x="803.1" y="1004.5" width="2.5" height="2.5" fill="#9cc8f0"/><rect x="791.1" y="1016.5" width="2.5" height="2.5" fill="#9cc8f0"/><path d="M801.1,1020 L806.1,1015" stroke="#f2c49a" stroke-width="2.2"/><path d="M815.8,1008 L819.8,1004.5 H829.8 V1018 L826.8,1021 V1008 Z" fill="#c6dcf2"/><path d="M815.8,1008 L819.8,1004.5 H829.8 L826.8,1008 Z" fill="#e8e8e8" stroke="#cfcfcf" stroke-width="0.8"/><path d="M839.5,1008 L843.5,1004.5 H853.5 V1018 L850.5,1021 V1008 Z" fill="#c6dcf2"/><path d="M839.5,1008 L843.5,1004.5 H853.5 L850.5,1008 Z" fill="#e8e8e8" stroke="#cfcfcf" stroke-width="0.8"/><path d="M862.3,1021.5 V1008.5 L865.8,1005 H870.8 Q874.8,1006 877.3,1011 V1017 L873.3,1021.5 Z" fill="#ececec" stroke="#c4c4c4" stroke-width="1"/><path d="M870.8,1005 Q875.3,1006 877.3,1011 L873.8,1014 Q872.8,1009 869.3,1008" fill="#b8d4ee"/><path d="M886.0,1011 Q886.5,1005 890.0,1005 Q892.0,1005 892.0,1008 V1017 L887.0,1021 Q885.5,1020 886.0,1018 Z M895.5,1011 L900.0,1005.5 Q902.0,1008 902.0,1011 V1018 Q901.0,1021 899.0,1021 L895.5,1017 Z" fill="#ececec" stroke="#c4c4c4" stroke-width="1"/><path d="M894.0,1010 V1015" stroke="#a8cdf0" stroke-width="1.2"/><rect x="911.2" y="1006" width="12" height="12" fill="none" stroke="#b8b8b8" stroke-dasharray="2,1.5"/><rect x="909.7" y="1004.5" width="2.5" height="2.5" fill="#9cc8f0"/><rect x="921.7" y="1004.5" width="2.5" height="2.5" fill="#9cc8f0"/><rect x="909.7" y="1016.5" width="2.5" height="2.5" fill="#9cc8f0"/><path d="M919.7,1020 L924.7,1015" stroke="#f2c49a" stroke-width="2.2"/><path d="M933.4,1007.5 L936.4,1004.5 H944.4 L941.4,1007.5 Z" fill="#dbe9f6"/><rect x="933.4" y="1007.5" width="8" height="12.5" fill="#c6dcf2"/><path d="M941.4,1007.5 L944.4,1004.5 V1017 L941.4,1020 Z" fill="#aecbea"/><path d="M933.4,1021 H941.4 L944.4,1018" stroke="#dcdcdc" stroke-width="1.5" fill="none"/><path d="M947.9,1019 V1006 M945.9,1008 L947.9,1005 L949.9,1008" stroke="#aaa" stroke-width="1" fill="none"/><path d="M957.1,1008.5 L960.6,1005 H972.1 V1018 L968.6,1021.5 H957.1 Z" fill="#efefef" stroke="#c4c4c4" stroke-width="1"/><path d="M957.1,1008.5 H968.6 V1021.5 M968.6,1008.5 L972.1,1005" fill="none" stroke="#c4c4c4" stroke-width="0.8"/><rect x="982.4" y="1006" width="12" height="12" fill="none" stroke="#b8b8b8" stroke-dasharray="2,1.5"/><rect x="980.9" y="1004.5" width="2.5" height="2.5" fill="#9cc8f0"/><rect x="992.9" y="1004.5" width="2.5" height="2.5" fill="#9cc8f0"/><rect x="980.9" y="1016.5" width="2.5" height="2.5" fill="#9cc8f0"/><path d="M990.9,1020 L995.9,1015" stroke="#f2c49a" stroke-width="2.2"/><path d="M1004.6,1007.5 L1007.6,1004.5 H1015.6 L1012.6,1007.5 Z" fill="#dbe9f6"/><rect x="1004.6" y="1007.5" width="8" height="12.5" fill="#c6dcf2"/><path d="M1012.6,1007.5 L1015.6,1004.5 V1017 L1012.6,1020 Z" fill="#aecbea"/><path d="M1004.6,1021 H1012.6 L1015.6,1018" stroke="#dcdcdc" stroke-width="1.5" fill="none"/><path d="M1019.1,1019 V1006 M1017.1,1008 L1019.1,1005 L1021.1,1008" stroke="#aaa" stroke-width="1" fill="none"/><path d="M1028.3,1021.5 V1008.5 L1031.8,1005 H1036.8 Q1040.8,1006 1043.3,1011 V1017 L1039.3,1021.5 Z" fill="#ececec" stroke="#c4c4c4" stroke-width="1"/><path d="M1036.8,1005 Q1041.3,1006 1043.3,1011 L1039.8,1014 Q1038.8,1009 1035.3,1008" fill="#b8d4ee"/><path d="M1052.0,1011 Q1052.5,1005 1056.0,1005 Q1058.0,1005 1058.0,1008 V1017 L1053.0,1021 Q1051.5,1020 1052.0,1018 Z M1061.5,1011 L1066.0,1005.5 Q1068.0,1008 1068.0,1011 V1018 Q1067.0,1021 1065.0,1021 L1061.5,1017 Z" fill="#ececec" stroke="#c4c4c4" stroke-width="1"/><path d="M1060.0,1010 V1015" stroke="#a8cdf0" stroke-width="1.2"/></g>
<!-- gear -->
<g transform="translate(1093.5,1018)"><g fill="#8a8a8a">
<circle r="6"/>
<rect x="-2" y="-8.5" width="4" height="17"/><rect x="-8.5" y="-2" width="17" height="4"/>
<rect x="-2" y="-8.5" width="4" height="17" transform="rotate(45)"/><rect x="-2" y="-8.5" width="4" height="17" transform="rotate(-45)"/>
</g><circle r="2.6" fill="#f1f1f1"/></g>
</svg>
<div class="a" style="left:1px;top:63px;width:1px;height:976px;background:#fff;z-index:9"></div>
<div class="a" style="left:1114px;top:63px;width:1px;height:976px;background:#fff;z-index:9"></div>
<div class="a" style="left:1px;top:1038px;width:1114px;height:1px;background:#fff;z-index:9"></div>

</body></html>
